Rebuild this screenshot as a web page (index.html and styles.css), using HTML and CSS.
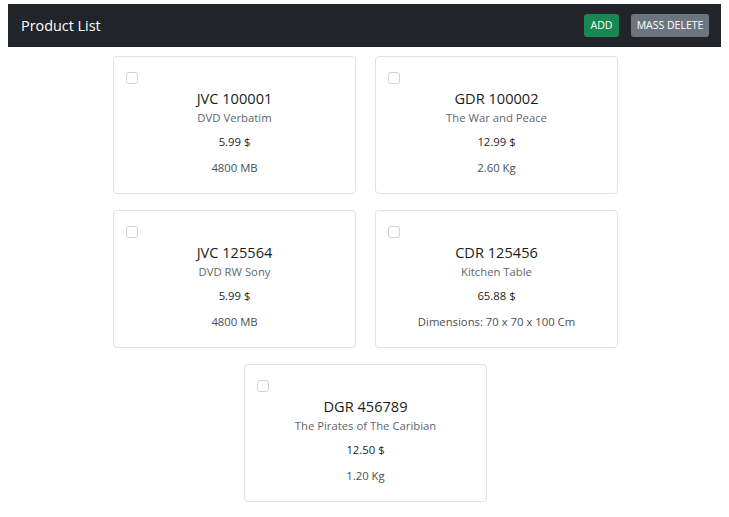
FILE: index.html
```html
<!DOCTYPE html>
<html lang="en">
<head>
<meta charset="utf-8">
<title>Product List</title>
<link rel="stylesheet" href="styles.css">
</head>
<body>
<nav class="navbar">
  <span class="brand">Product List</span>
  <div class="actions">
    <button class="btn btn-add">ADD</button>
    <button class="btn btn-delete">MASS DELETE</button>
  </div>
</nav>
<main class="list">
  <div class="card">
    <input type="checkbox" class="check">
    <h5 class="sku">JVC 100001</h5>
    <h6 class="name">DVD Verbatim</h6>
    <p class="price">5.99 $</p>
    <p class="attr">4800 MB</p>
  </div>
  <div class="card">
    <input type="checkbox" class="check">
    <h5 class="sku">GDR 100002</h5>
    <h6 class="name">The War and Peace</h6>
    <p class="price">12.99 $</p>
    <p class="attr">2.60 Kg</p>
  </div>
  <div class="card">
    <input type="checkbox" class="check">
    <h5 class="sku">JVC 125564</h5>
    <h6 class="name">DVD RW Sony</h6>
    <p class="price">5.99 $</p>
    <p class="attr">4800 MB</p>
  </div>
  <div class="card">
    <input type="checkbox" class="check">
    <h5 class="sku">CDR 125456</h5>
    <h6 class="name">Kitchen Table</h6>
    <p class="price">65.88 $</p>
    <p class="attr">Dimensions: 70 x 70 x 100 Cm</p>
  </div>
  <div class="card">
    <input type="checkbox" class="check">
    <h5 class="sku">DGR 456789</h5>
    <h6 class="name">The Pirates of The Caribian</h6>
    <p class="price">12.50 $</p>
    <p class="attr">1.20 Kg</p>
  </div>
</main>
</body>
</html>
```

FILE: styles.css
```css
* { box-sizing: border-box; }

body {
  margin: 0;
  padding: 4px 8px 0;
  background: #fff;
  font-family: "Open Sans", "Noto Sans", sans-serif;
  color: #212529;
}

.navbar {
  height: 43px;
  background: #212529;
  display: flex;
  align-items: center;
  justify-content: space-between;
  padding: 0 12px 0 13px;
}

.brand {
  color: #fff;
  font-size: 14.4px;
  line-height: 17px;
}

.actions {
  display: flex;
  gap: 12px;
}

.btn {
  border: 0;
  border-radius: 3px;
  height: 23px;
  padding: 0;
  color: #fff;
  font-family: "Open Sans", "Noto Sans", sans-serif;
  font-size: 10.5px;
  line-height: 23px;
}

.btn-add { background: #198754; width: 35px; }
.btn-delete { background: #6c757d; width: 78px; }

.list {
  display: flex;
  flex-wrap: wrap;
  justify-content: center;
  column-gap: 19px;
  row-gap: 16px;
  width: 507px;
  padding-left: 2px;
  margin: 9px auto 0;
}

.card {
  width: 243px;
  height: 138px;
  border: 1px solid #dee2e6;
  border-radius: 4px;
  padding: 15px 12px 0;
  display: flex;
  flex-direction: column;
  align-items: center;
  text-align: center;
}

.check {
  appearance: none;
  align-self: flex-start;
  width: 12px;
  height: 12px;
  margin: 0;
  border: 1px solid #ced4da;
  border-radius: 3px;
  background: #fff;
}

.sku {
  margin: 5px 0 0;
  font-size: 14.6px;
  font-weight: 500;
  line-height: 18px;
  color: #1a1d20;
}

.name {
  margin: 4px 0 0;
  font-size: 11.3px;
  font-weight: 500;
  line-height: 14px;
  color: #5f676f;
}

.price {
  margin: 8px 0 0;
  font-size: 11.3px;
  line-height: 17px;
  color: #212529;
}

.attr {
  margin: 9px 0 0;
  font-size: 11.3px;
  line-height: 17px;
  color: #495057;
}
```
